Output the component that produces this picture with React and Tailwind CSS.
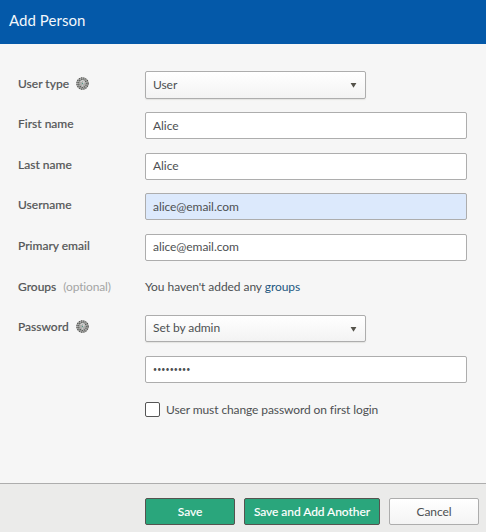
function HelpIcon() {
  return (
    <svg width="13" height="13" viewBox="0 0 13 13" className="ml-[7px] shrink-0">
      <circle cx="6.5" cy="6.5" r="6.3" fill="#aeafad" />
      <g fill="none" stroke="#4d4e4b" strokeWidth="1.1" strokeDasharray="1.2 1">
        <circle cx="6.5" cy="6.5" r="5.6" />
        <circle cx="6.5" cy="6.5" r="3.9" strokeDashoffset="1" />
      </g>
      <path d="M4.8 5q.3-1.5 1.8-1.5Q8.3 3.6 8.2 5 8 6 6.5 6.8" fill="none" stroke="#e2e4e3" strokeWidth="1" />
      <rect x="6" y="8.5" width="1" height="1" fill="#e2e4e3" />
      <rect x="6" y="6" width="1" height="1" fill="#4f9c86" />
    </svg>
  );
}

function Row({ label, top, children, className = "" }) {
  return (
    <div className={`flex items-start ${className}`}>
      <div className={`flex h-[13px] w-[127px] shrink-0 items-center leading-[13px] whitespace-nowrap ${top}`}>{label}</div>
      {children}
    </div>
  );
}

function Label({ children }) {
  return <span className="font-medium tracking-normal text-[#555758] [-webkit-text-stroke:0.15px_#555758]">{children}</span>;
}

function Input({ value, className = "bg-white pb-px", text = "" }) {
  return (
    <div className={`flex h-[27px] w-[322px] items-center rounded-[2px] border border-[#adadad] pl-[7px] ${className}`}>
      <span className={text}>{value}</span>
    </div>
  );
}

function Select({ value, className }) {
  return (
    <div className={`flex w-[221px] items-center justify-between rounded-[2px] border border-[#adadad] bg-linear-to-b from-white to-[#f3f3f3] pr-[8px] pb-px pl-[7px] shadow-[0_1px_1px_#e4e4e2] ${className}`}>
      <span>{value}</span>
      <svg width="7" height="6" viewBox="0 0 7 6" className="mt-px"><path d="M.6 1h5.8L3.5 5.7z" fill="#55534b" /></svg>
    </div>
  );
}

export default function App() {
  return (
    <div className="flex h-[532px] w-[486px] flex-col overflow-hidden bg-[#f6f6f6] font-['Lato','Open_Sans',sans-serif] text-[12px] leading-[14px] tracking-[-0.06px] text-[#4d5052]">
      <header className="flex h-[44px] shrink-0 items-center bg-[#0459a9] pb-[4px] pl-[9px] text-[15px] text-[#f3f7fb]">
        <h1 className="tracking-[0.05px]">Add Person</h1>
      </header>
      <main className="flex grow flex-col pt-[27px] pl-[18px]">
        <Row top="mt-[6px]" className="h-[41px]" label={<><Label>User type</Label><HelpIcon /></>}>
          <Select value="User" className="h-[28px]" />
        </Row>
        <Row top="mt-[5px]" className="h-[41px]" label={<Label>First name</Label>}>
          <Input value="Alice" className="bg-white" />
        </Row>
        <Row top="mt-[5px]" className="h-[40px]" label={<Label>Last name</Label>}>
          <Input value="Alice" />
        </Row>
        <Row top="mt-[5px]" className="h-[41px]" label={<Label>Username</Label>}>
          <Input value="alice@email.com" className="bg-[#dce9fc]" />
        </Row>
        <Row top="mt-[5px]" className="h-[41px]" label={<Label>Primary email</Label>}>
          <Input value="alice@email.com" />
        </Row>
        <Row top="mt-[5px]" className="h-[40px]" label={<><Label>Groups</Label><span className="ml-[7px] text-[#a4a5a5] tracking-[-0.15px]">(optional)</span></>}>
          <p className="mt-[5px]">
            You haven't added any <span className="text-[#24577f]">groups</span>
          </p>
        </Row>
        <Row top="mt-[5px]" className="h-[41px]" label={<><Label>Password</Label><HelpIcon /></>}>
          <Select value="Set by admin" className="h-[27px]" />
        </Row>
        <Row top="" className="h-[46px]" label="">
          <Input value="•••••••••" text="text-[7px] leading-[14px] tracking-[0.1px]" className="bg-white pb-px" />
        </Row>
        <label className="ml-[127px] flex h-[15px] items-center gap-[6px]">
          <span className="h-[15px] w-[15px] rounded-[2px] border border-[#555] bg-white" />
          <span className="tracking-[-0.1px]">User must change password on first login</span>
        </label>
      </main>
      <footer className="flex h-[49px] shrink-0 gap-[9px] border-t border-[#adadad] bg-[#ebebea] pt-[14px] pl-[145px]">
        <button className="h-[27px] w-[90px] rounded-[2px] border border-[#55534f] bg-[#2aa67c] font-medium text-white [-webkit-text-stroke:0.1px_white]">Save</button>
        <button className="h-[27px] w-[136px] rounded-[2px] border border-[#55534f] bg-[#2aa67c] font-medium text-white [-webkit-text-stroke:0.1px_white]">Save and Add Another</button>
        <button className="h-[27px] w-[90px] rounded-[2px] border border-[#adadad] bg-linear-to-b from-white to-[#f4f4f4]">Cancel</button>
      </footer>
    </div>
  );
}
